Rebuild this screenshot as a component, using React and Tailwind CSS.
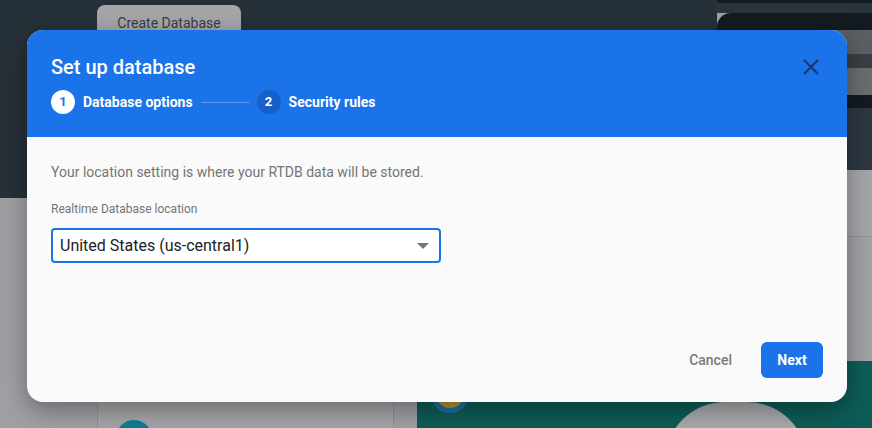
import React from 'react';

function Stepper() {
  return (
    <div className="flex items-center mt-[11px]">
      <span className="w-6 h-6 rounded-full bg-white text-[#1a73e8] text-[13px] font-bold flex items-center justify-center">1</span>
      <span className="ml-2 text-white text-sm font-bold">Database options</span>
      <span className="mx-2 w-12 h-px bg-[#5e9bf0]" />
      <span className="w-6 h-6 rounded-full bg-[#1760c9] text-white text-[13px] font-bold flex items-center justify-center">2</span>
      <span className="ml-2 text-white text-sm font-bold">Security rules</span>
    </div>
  );
}

function Dialog() {
  return (
    <div className="absolute z-20 left-[27px] top-[30px] w-[820px] h-[372px] rounded-2xl overflow-hidden bg-[#fafafa] shadow-[0_8px_24px_rgba(0,0,0,0.35)] flex flex-col">
      {/* Header */}
      <div className="h-[107px] shrink-0 bg-[#1a73e8] px-6 pt-[25px] flex items-start justify-between">
        <div>
          <h2 className="text-white text-[20px] font-medium leading-6">Set up database</h2>
          <Stepper />
        </div>
        <button className="w-6 h-6 flex items-center justify-center text-[#1b3564]">
          <svg width="24" height="24" viewBox="0 0 24 24" fill="none" stroke="currentColor" strokeWidth="1.8">
            <path d="M5 5l14 14M19 5L5 19" />
          </svg>
        </button>
      </div>

      {/* Body */}
      <div className="flex-1 px-6 pt-[25px] flex flex-col">
        <p className="text-sm text-[#757575] leading-5">Your location setting is where your RTDB data will be stored.</p>
        <label className="mt-[19px] text-xs text-[#757575] leading-4">Realtime Database location</label>
        <div className="mt-[11px] w-[390px] h-[35px] bg-white border-2 border-[#1a73e8] rounded flex items-center justify-between pl-[7px] pr-[10px]">
          <span className="text-base text-[#202124]">United States (us-central1)</span>
          <svg width="12" height="6" viewBox="0 0 10 5">
            <path d="M0 0l5 5 5-5z" fill="#757575" />
          </svg>
        </div>

        <div className="mt-auto mb-6 flex items-center justify-end">
          <button className="text-sm font-medium text-[#7a7a7a] mr-[29px]">Cancel</button>
          <button className="h-9 w-[62px] rounded-md bg-[#1a73e8] text-white text-sm font-bold">Next</button>
        </div>
      </div>
    </div>
  );
}

export default function App() {
  return (
    <div className="relative w-[872px] h-[428px] overflow-hidden bg-[#9ea0a4] flex" style={{ fontFamily: 'Roboto, "Liberation Sans", sans-serif' }}>
      {/* Page behind the overlay */}
      <div className="w-[717px] shrink-0 flex flex-col">
        <div className="h-[198px] shrink-0 bg-[#263038] pl-[97px] pt-[5px]">
          <div className="w-[144px] h-[40px] rounded-lg bg-[#a3a5a8] text-[#3a3d40] text-[14px] pt-[8px] text-center">Create Database</div>
        </div>
        <div className="flex-1 flex pl-[97px] pt-[150px]">
          <div className="w-[297px] shrink-0 h-full border-x border-[#8e9094] bg-[#a3a5a8] pt-[72px] pl-[18px]">
            <div className="w-[36px] h-[36px] rounded-full bg-[#0b7f92]" />
          </div>
          <div className="ml-[23px] mt-[14px] flex-1 bg-[#0e5c56] pt-[13px] pl-[14px] flex items-start">
            <div className="w-[38px] h-[38px] rounded-full border-[5px] border-[#1a6fa5] bg-[#b8922e] shrink-0" />
            <div className="relative z-10 ml-[196px] mt-[27px] w-[142px] h-[80px] rounded-t-[60px] bg-[#a7a9ab] shrink-0" />
          </div>
        </div>
      </div>
      <div className="flex-1 flex flex-col">
        <div className="h-[3px] shrink-0 bg-[#141c21]" />
        <div className="h-[10px] shrink-0 bg-[#2a343b]" />
        <div className="h-[95px] shrink-0 rounded-tl-[14px] bg-[#131b20] pl-[28px] pt-[17px] flex flex-col">
          <div className="h-[24px] bg-[#5a5f64] rounded-tl-lg" />
          <div className="h-[14px] bg-[#3a3f45]" />
          <div className="h-[27px] bg-[#6a6d70]" />
        </div>
        <div className="h-[62px] shrink-0 bg-[#2c3740]" />
        <div className="h-[67px] shrink-0 bg-[#a3a5a8] border-b border-[#8e9094]" />
        <div className="h-[124px] shrink-0 bg-[#9fa1a5]" />
        <div className="flex-1 bg-[#0e5c56]" />
      </div>

      <Dialog />
    </div>
  );
}
